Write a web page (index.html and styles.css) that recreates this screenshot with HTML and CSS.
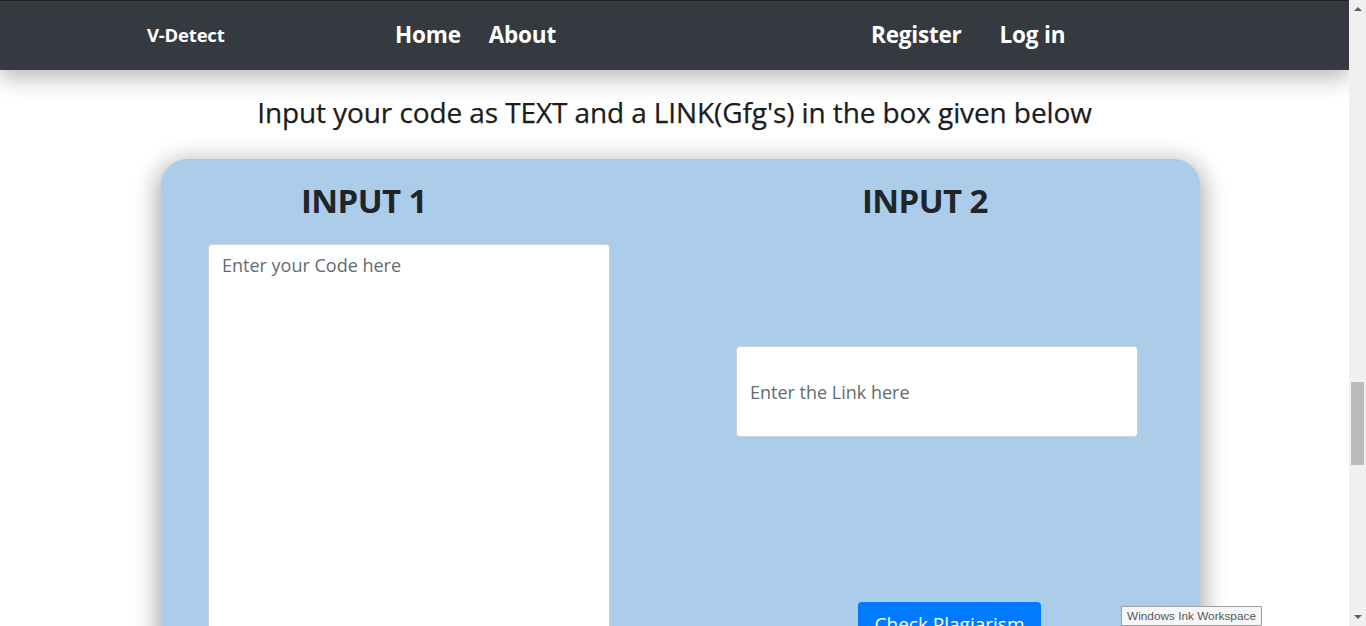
FILE: index.html
```html
<!DOCTYPE html>
<html lang="en">
<head>
<meta charset="utf-8">
<title>V-Detect</title>
<link rel="stylesheet" href="styles.css">
</head>
<body>
<div class="page">
  <div class="main">
    <nav class="navbar">
      <a class="brand" href="#">V-Detect</a>
      <div class="nav-left">
        <a class="nav-link" href="#">Home</a>
        <a class="nav-link" href="#">About</a>
      </div>
      <div class="nav-right">
        <a class="nav-link" href="#">Register</a>
        <a class="nav-link" href="#">Log in</a>
      </div>
    </nav>
    <h2 class="title">Input your code as TEXT and a LINK(Gfg's) in the box given below</h2>
    <section class="card">
      <div class="col col-code">
        <h1 class="col-head head-1">INPUT 1</h1>
        <textarea class="code-box" placeholder="Enter your Code here"></textarea>
      </div>
      <div class="col col-link">
        <h1 class="col-head head-2">INPUT 2</h1>
        <input class="link-box" type="text" placeholder="Enter the Link here">
        <button class="btn-check" type="button">Check Plagiarism</button>
      </div>
    </section>
  </div>
  <div class="scrollbar">
    <span class="arrow arrow-up"></span>
    <div class="track"><div class="thumb"></div></div>
    <span class="arrow arrow-down"></span>
  </div>
</div>
<div class="tooltip">Windows Ink Workspace</div>
</body>
</html>
```

FILE: styles.css
```css
html, body {
  margin: 0;
  padding: 0;
  height: 626px;
  overflow: hidden;
  background: #ffffff;
}
body {
  font-family: "Open Sans", "Noto Sans", sans-serif;
  color: #212529;
}
.page {
  display: flex;
  height: 626px;
}
.main {
  width: 1349px;
  flex: none;
  overflow: hidden;
  position: relative;
}
.navbar {
  height: 69px;
  border-top: 1px solid #1e2125;
  background: #343a40;
  display: flex;
  align-items: center;
  padding-left: 147px;
  box-shadow: 0 8px 22px rgba(0, 0, 0, 0.28);
  position: relative;
  z-index: 2;
}
.brand {
  color: #ffffff;
  font-family: "Open Sans", sans-serif;
  font-weight: 700;
  font-size: 18.5px;
  text-decoration: none;
  width: 248px;
  letter-spacing: -0.2px;
  margin-top: -2px;
}
.nav-left {
  display: flex;
  gap: 28px;
  width: 476px;
}
.nav-right {
  display: flex;
  gap: 38px;
}
.nav-link {
  color: #ffffff;
  font-family: "Open Sans", sans-serif;
  font-weight: 700;
  font-size: 22.5px;
  text-decoration: none;
  letter-spacing: -0.2px;
  margin-top: -2px;
}
.title {
  margin: 22px 0 0;
  text-align: center;
  font-weight: 500;
  font-size: 28px;
  line-height: 40px;
  color: #1a1d20;
  letter-spacing: -0.1px;
  -webkit-text-stroke: 0.25px #1a1d20;
}
.card {
  margin: 27px 0 0 161px;
  width: 1039px;
  height: 600px;
  background: #abcde9;
  border-radius: 26px;
  box-shadow: 0 6px 24px 4px rgba(0, 0, 0, 0.33);
  display: flex;
}
.col {
  display: flex;
  flex-direction: column;
}
.col-code {
  margin-left: 47px;
  width: 402px;
}
.col-link {
  margin-left: 126px;
  width: 402px;
}
.col-head {
  margin: 20px 0 0;
  font-size: 33px;
  line-height: 44px;
  font-weight: 700;
  color: #212529;
  letter-spacing: -0.6px;
}
.head-1 { padding-left: 93px; }
.head-2 { padding-left: 126px; }
.code-box {
  margin-top: 21px;
  width: 402px;
  height: 420px;
  box-sizing: border-box;
  border: 1px solid #ced4da;
  border-radius: 4px;
  padding: 8px 13px;
  font-family: "Open Sans", sans-serif;
  font-weight: 500;
  font-size: 18px;
  resize: none;
  background: #ffffff;
}
.link-box {
  margin-top: 123px;
  width: 402px;
  height: 91px;
  box-sizing: border-box;
  border: 1px solid #ced4da;
  border-radius: 4px;
  padding: 0 13px;
  font-family: "Open Sans", sans-serif;
  font-weight: 500;
  font-size: 18px;
  background: #ffffff;
}
.code-box::placeholder,
.link-box::placeholder {
  color: #646b72;
  opacity: 1;
}
.btn-check {
  margin: 165px 0 0 122px;
  align-self: flex-start;
  width: 183px;
  height: 46px;
  background: #007bff;
  color: #ffffff;
  border: none;
  border-radius: 4px;
  font-family: "Open Sans", sans-serif;
  font-size: 19px;
  padding: 10px 0 0;
  line-height: 24px;
  text-align: center;
  display: flex;
  align-items: flex-start;
  justify-content: center;
}
.scrollbar {
  width: 17px;
  flex: none;
  background: #f0f0f0;
  display: flex;
  flex-direction: column;
  align-items: center;
}
.arrow {
  width: 0;
  height: 0;
  border-left: 4px solid transparent;
  border-right: 4px solid transparent;
  flex: none;
}
.arrow-up {
  margin-top: 7px;
  border-bottom: 4px solid #606060;
}
.arrow-down {
  margin-bottom: 7px;
  border-top: 4px solid #606060;
}
.track {
  flex: 1;
  width: 100%;
  display: flex;
  justify-content: center;
}
.thumb {
  margin-top: 371px;
  width: 13px;
  height: 83px;
  background: #bcbcbc;
}
.tooltip {
  position: absolute;
  left: 1121px;
  top: 606px;
  height: 18px;
  padding: 0 5px;
  border: 1px solid #a0a0a0;
  background: #f7f7f7;
  color: #575757;
  font-family: "Liberation Sans", sans-serif;
  font-size: 11.8px;
  line-height: 18px;
  z-index: 5;
}
```
